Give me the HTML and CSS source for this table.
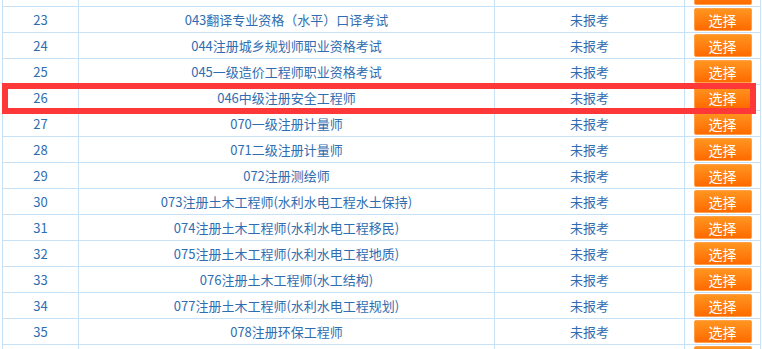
FILE: index.html
```html
<!DOCTYPE html>
<html lang="zh-CN">
<head>
<meta charset="utf-8">
<link rel="stylesheet" href="styles.css">
</head>
<body>
<div class="wrap">
<table class="list">
<colgroup><col class="c-no"><col class="c-name"><col class="c-status"><col class="c-act"></colgroup>
<tbody>
<tr class="clipped"><td></td><td></td><td></td><td><span class="btn btn-stub" aria-hidden="true"></span></td></tr>
<tr><td>23</td><td>043翻译专业资格（水平）口译考试</td><td>未报考</td><td><button class="btn">选择</button></td></tr>
<tr><td>24</td><td>044注册城乡规划师职业资格考试</td><td>未报考</td><td><button class="btn">选择</button></td></tr>
<tr><td>25</td><td>045一级造价工程师职业资格考试</td><td>未报考</td><td><button class="btn">选择</button></td></tr>
<tr><td>26</td><td>046中级注册安全工程师</td><td>未报考</td><td><button class="btn">选择</button></td></tr>
<tr><td>27</td><td>070一级注册计量师</td><td>未报考</td><td><button class="btn">选择</button></td></tr>
<tr><td>28</td><td>071二级注册计量师</td><td>未报考</td><td><button class="btn">选择</button></td></tr>
<tr><td>29</td><td>072注册测绘师</td><td>未报考</td><td><button class="btn">选择</button></td></tr>
<tr><td>30</td><td>073注册土木工程师(水利水电工程水土保持)</td><td>未报考</td><td><button class="btn">选择</button></td></tr>
<tr><td>31</td><td>074注册土木工程师(水利水电工程移民)</td><td>未报考</td><td><button class="btn">选择</button></td></tr>
<tr><td>32</td><td>075注册土木工程师(水利水电工程地质)</td><td>未报考</td><td><button class="btn">选择</button></td></tr>
<tr><td>33</td><td>076注册土木工程师(水工结构)</td><td>未报考</td><td><button class="btn">选择</button></td></tr>
<tr><td>34</td><td>077注册土木工程师(水利水电工程规划)</td><td>未报考</td><td><button class="btn">选择</button></td></tr>
<tr><td>35</td><td>078注册环保工程师</td><td>未报考</td><td><button class="btn">选择</button></td></tr>
<tr class="clipped"><td></td><td></td><td></td><td><span class="btn btn-stub" aria-hidden="true"></span></td></tr>
</tbody>
</table>
<div class="highlight"></div>
</div>
</body>
</html>
```
FILE: styles.css
```css
html, body {
  margin: 0;
  padding: 0;
  background: #ffffff;
  overflow: hidden;
}
.wrap {
  position: relative;
  margin-top: -20px;
  padding-left: 2px;
  font-family: "Noto Sans CJK SC", "Noto Sans", sans-serif;
}
.list {
  border-collapse: collapse;
  table-layout: fixed;
  width: 758px;
}
.c-no { width: 76px; }
.c-name { width: 416px; }
.c-status { width: 190px; }
.c-act { width: 76px; }
.list td {
  border: 1px solid #c7e2f6;
  height: 25px;
  padding: 0;
  text-align: center;
  vertical-align: middle;
  color: #2f6db0;
  font-size: 13px;
  line-height: 25px;
  white-space: nowrap;
}
.btn {
  display: block;
  box-sizing: border-box;
  margin: 0 auto;
  width: 58px;
  height: 23px;
  padding: 0;
  border: 1px solid #ffa04a;
  border-radius: 2px;
  background: linear-gradient(#ff951f, #ff6a00);
  color: #ffffff;
  font-family: "Noto Sans CJK SC", sans-serif;
  font-size: 14px;
  line-height: 20px;
}
.highlight {
  position: absolute;
  left: 2px;
  top: 103px;
  width: 742px;
  height: 19px;
  border: 6px solid #fe3838;
}
```
